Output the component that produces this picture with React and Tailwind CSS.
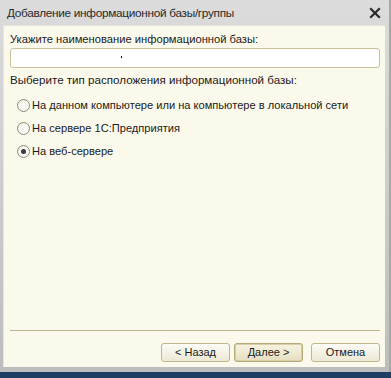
export default function App() {
  const options = [
    'На данном компьютере или на компьютере в локальной сети',
    'На сервере 1С:Предприятия',
    'На веб-сервере',
  ]
  const selected = 2

  return (
    <div className="w-[391px] h-[378px] flex flex-col bg-[#1d3b5e] overflow-hidden text-[11px] text-[#1a1a1a]" style={{ fontFamily: '"Liberation Sans", Arial, sans-serif' }}>
      {/* window frame */}
      <div className="h-[372px] flex flex-col bg-gradient-to-b from-[#dcdcdc] to-[#bdbdbd] pl-[3px] pr-[6px] pb-[5px] shadow-[inset_-2px_0_0_#a8a8a8]">
        <div className="h-[25px] flex items-center justify-between pl-[4px] pr-[2px]">
          <span className="text-[11.8px] text-[#2a2a2a] pt-[2px] tracking-[-0.3px]">Добавление информационной базы/группы</span>
          <svg width="14" height="14" viewBox="0 0 14 14" className="mr-[1px]">
            <path d="M3 3 L11 11 M11 3 L3 11" stroke="#2b2b2b" strokeWidth="2.2" strokeLinecap="square" />
          </svg>
        </div>

        <div className="flex-1 flex flex-col bg-[#fbf9eb] border-l border-t border-[#e8e6d8] pl-[6px] pr-[5px]">
          <div className="mt-[6px] leading-[14px] text-[11.2px]">Укажите наименование информационной базы:</div>
          <div className="relative mt-[2px] h-[20px] rounded-[3px] border border-[#c9c19a] bg-white">
            <span className="absolute left-[110px] top-[7px] w-[1px] h-[2px] bg-black" />
          </div>

          <div className="mt-[5px] leading-[14px] text-[11.6px]">Выберите тип расположения информационной базы:</div>
          <div className="mt-[11px] flex flex-col gap-[9px] pl-[7px]">
            {options.map((o, i) => (
              <label key={o} className="flex items-center gap-[2px] h-[14px] leading-[14px] text-[11.1px]">
                <span className="w-[13px] h-[13px] rounded-full border border-[#8f8a72] bg-gradient-to-br from-[#f1efe6] to-white flex items-center justify-center">
                  {i === selected && <span className="w-[5px] h-[5px] rounded-full bg-[#3a3a3a]" />}
                </span>
                <span>{o}</span>
              </label>
            ))}
          </div>

          <div className="flex-1" />
          <div className="h-px bg-[#bdb58c]" />
          <div className="flex justify-end gap-[4px] mt-[12px] mb-[5px]">
            <button className="w-[69px] h-[19px] rounded-[3px] border border-[#bfb68c] bg-gradient-to-b from-[#fdfcf6] to-[#ece8d4] text-[#1a1a1a] leading-none">&lt; Назад</button>
            <button className="w-[69px] h-[19px] rounded-[3px] border border-[#b3a877] bg-gradient-to-b from-[#f7f3e0] to-[#e6dfc0] shadow-[inset_0_0_0_1px_#d8cfa6] text-[#1a1a1a] leading-none">Далее &gt;</button>
            <button className="ml-[4px] w-[69px] h-[19px] rounded-[3px] border border-[#bfb68c] bg-gradient-to-b from-[#fdfcf6] to-[#ece8d4] text-[#1a1a1a] leading-none">Отмена</button>
          </div>
        </div>
      </div>
      <div className="flex-1 bg-[#1e3f63]" />
    </div>
  )
}
